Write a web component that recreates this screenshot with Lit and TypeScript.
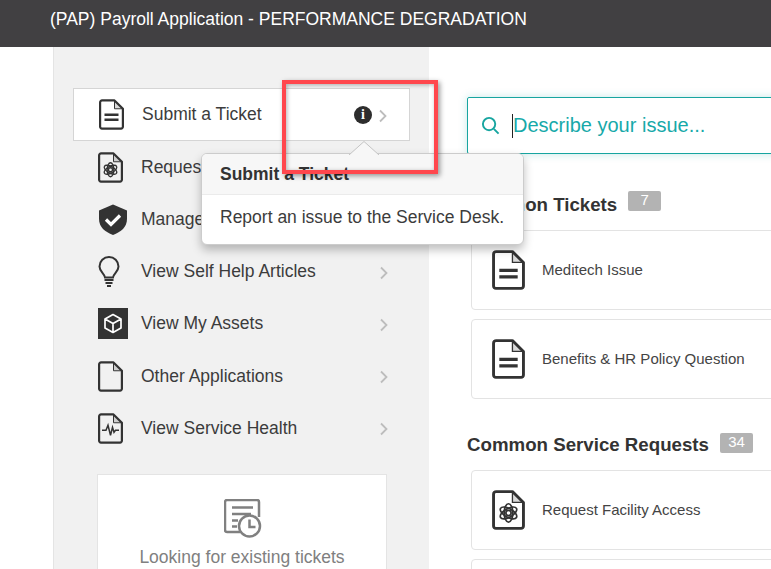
import { LitElement, html, css, svg } from "lit";
import { customElement } from "lit/decorators.js";

const DOC = "M3.1 1.2H15.5L23.9 9.5V27.5a1.8 1.8 0 0 1-1.8 1.8H2.9A1.8 1.8 0 0 1 1.1 27.5V3.2A2 2 0 0 1 3.1 1.2Z";
const FOLD = "M15.5 1.2V9.5H23.9";

const docBase = svg`<path d=${DOC} fill="none" stroke="currentColor" stroke-width="2.2" stroke-linejoin="round"/><path d="M15.5 1.5V9.100H23.400Z" fill="currentColor" opacity=".18"/><path d=${FOLD} fill="none" stroke="currentColor" stroke-width="1"/>`;

const flower = svg`<g fill="none" stroke="currentColor" stroke-width="1.3"><ellipse cx="12.5" cy="17.5" rx="3.300" ry="7"/><ellipse cx="12.5" cy="17.5" rx="3.300" ry="7" transform="rotate(60 12.5 17.5)"/><ellipse cx="12.5" cy="17.5" rx="3.300" ry="7" transform="rotate(120 12.5 17.5)"/><circle cx="12.5" cy="17.5" r="2"/></g>`;

const lines = svg`<path d="M5.500 15.5H19.500M5.500 20.5H19.500" stroke="currentColor" stroke-width="2.4" fill="none"/>`;

const icons = {
  ticket: html`<svg width="25" height="31" viewBox="0 0 25 30.5">${docBase}${lines}</svg>`,
  request: html`<svg width="25" height="31" viewBox="0 0 25 30.5">${docBase}${flower}</svg>`,
  shield: html`<svg width="30" height="31" viewBox="0 0 30 31"><path d="M15 .5 29 6.5V15C29 23 23 28 15 31 7 28 1 23 1 15V6.5Z" fill="currentColor"/><path d="M8 15.5 13 20.5 22 11.5" fill="none" stroke="#fff" stroke-width="3.2"/></svg>`,
  bulb: html`<svg width="22" height="31" viewBox="0 0 22 31"><path d="M7 21.5C6.5 17.5 1.5 15.500 1.500 10.500A9.500 9.500 0 0 1 20.500 10.500C20.500 15.500 15.500 17.500 15 21.500Z" fill="none" stroke="currentColor" stroke-width="2"/><path d="M6.500 24H15.500M7.500 27H14.500M9 30H13" stroke="currentColor" stroke-width="2" fill="none"/></svg>`,
  assets: html`<svg width="30" height="31" viewBox="0 0 30 31"><rect width="30" height="31" fill="currentColor"/><path d="M15 6.500 23 11V20L15 24.500 7 20V11ZM7 11 15 15.500 23 11M15 15.500V24.500" fill="none" stroke="#fff" stroke-width="1.700" stroke-linejoin="round"/></svg>`,
  blank: html`<svg width="25" height="31" viewBox="0 0 25 30.5">${docBase}</svg>`,
  health: html`<svg width="25" height="31" viewBox="0 0 25 30.5">${docBase}<path d="M4 17H8L10 12 12.500 22 14.500 14 16 19 17.500 17H21" fill="none" stroke="currentColor" stroke-width="1.500"/></svg>`,
};

const chevron = html`<svg class="chev" width="8" height="14" viewBox="0 0 8 14"><path d="M1 1.500 6.500 7 1 12.500" fill="none" stroke="#bdbdbd" stroke-width="1.800"/></svg>`;

const menu = [
  { icon: icons.request, label: "Request a Service" },
  { icon: icons.shield, label: "Manage Approvals" },
  { icon: icons.bulb, label: "View Self Help Articles" },
  { icon: icons.assets, label: "View My Assets" },
  { icon: icons.blank, label: "Other Applications" },
  { icon: icons.health, label: "View Service Health" },
];

const cardIcon = (body: unknown) => html`<svg class="card-icon" width="33" height="40" viewBox="0 0 25 30.5">${body}</svg>`;

@customElement("app-root")
export class AppRoot extends LitElement {
  static styles = css`
    :host {
      display: block;
      position: relative;
      width: 771px;
      height: 569px;
      overflow: hidden;
      background: #fff;
      font-family: "Liberation Sans", Arial, sans-serif;
      color: #333;
    }
    .header {
      height: 47px;
      box-sizing: border-box;
      background: #414042;
      color: #fff;
      font-size: 17.5px;
      line-height: 38px;
      padding-left: 50px;
      white-space: nowrap;
    }
    .body {
      display: flex;
      align-items: flex-start;
      padding-left: 53px;
      height: 522px;
    }
    .side {
      width: 376px;
      height: 522px;
      flex: none;
      box-sizing: border-box;
      background: #f1f1f1;
      border-left: 1px solid #e4e4e4;
      padding: 41px 19px 0;
    }
    .row {
      display: flex;
      align-items: center;
      height: 52.25px;
      box-sizing: border-box;
      padding: 0 22px 0 25px;
      font-size: 17.5px;
      color: #3c3c3c;
      white-space: nowrap;
    }
    .row.active {
      height: 53px;
      background: #fff;
      border: 1px solid #d5d5d5;
    }
    .ico {
      width: 43px;
      flex: none;
      display: flex;
      color: #333;
    }
    .label { flex: 1; }
    .chev { flex: none; margin-top: 2px; }
    .info {
      flex: none;
      width: 18px;
      height: 18px;
      border-radius: 50%;
      background: #2d2d2d;
      color: #fff;
      font: bold 14px/18px "Liberation Serif", serif;
      text-align: center;
      margin-right: 7px;
    }
    .looking {
      margin: 19.5px 0 0 24px;
      width: 290px;
      height: 140px;
      box-sizing: border-box;
      background: #fff;
      border: 1px solid #e4e4e4;
      padding-top: 24px;
      display: flex;
      flex-direction: column;
      align-items: center;
      color: #808080;
      font-size: 17.5px;
    }
    .looking svg { margin-bottom: 9px; margin-left: 2px; }
    .main {
      flex: none;
      width: 400px;
      margin-left: 38px;
      padding-top: 50px;
    }
    .search {
      height: 57px;
      box-sizing: border-box;
      border: 1px solid #17a5a0;
      border-radius: 2px;
      box-shadow: 0 0 8px rgba(23, 165, 160, .25);
      display: flex;
      align-items: center;
      padding-left: 13px;
      color: #17a9a9;
      font-size: 20px;
    }
    .search svg { margin-right: 12px; }
    .caret { width: 1px; height: 24px; background: #222; margin-right: 0; }
    .heading {
      display: flex;
      align-items: center;
      font-size: 18.7px;
      font-weight: bold;
      color: #333;
      height: 24px;
      white-space: nowrap;
    }
    .h1 { margin: 39px 0 13px; }
    .h2 { margin: 34px 0 13px; }
    .badge {
      margin: -8px 0 0 11px;
      width: 33px;
      height: 20px;
      border-radius: 2px;
      background: #b3b3b3;
      color: #fff;
      font-size: 15px;
      font-weight: normal;
      line-height: 18px;
      text-align: center;
    }
    .badge.b2 { margin-top: -4px; }
    .card {
      margin: 0 0 9px 4px;
      height: 80px;
      box-sizing: border-box;
      border: 1px solid #e3e3e3;
      border-radius: 4px;
      display: flex;
      align-items: center;
      padding-left: 20px;
      font-size: 15px;
      color: #444;
      white-space: nowrap;
    }
    .card-text { margin-bottom: 2px; }
    .card-icon { color: #333; margin-right: 17px; flex: none; }
    .tip {
      position: absolute;
      left: 201px;
      top: 153px;
      width: 323px;
      height: 92px;
      box-sizing: border-box;
      background: #fff;
      border: 1px solid #ccc;
      border-radius: 6px;
      box-shadow: 0 5px 10px rgba(0, 0, 0, .25);
    }
    .tip-title {
      height: 41px;
      box-sizing: border-box;
      background: #f7f7f7;
      border-bottom: 1px solid #ebebeb;
      border-radius: 5px 5px 0 0;
      font-size: 17.5px;
      font-weight: bold;
      line-height: 40px;
      padding-left: 18px;
    }
    .tip-body {
      font-size: 17.5px;
      line-height: 45px;
      padding-left: 18px;
      color: #3c3c3c;
      white-space: nowrap;
    }
    .arrow {
      position: absolute;
      left: 147px;
      top: -13px;
    }
    .mark {
      position: absolute;
      left: 282px;
      top: 80px;
      width: 156px;
      height: 94px;
      box-sizing: border-box;
      border: 4px solid #ff474d;
      box-shadow: 2px 2px 5px rgba(0, 0, 0, .4), inset 1px 1px 4px rgba(0, 0, 0, .3);
    }
  `;

  render() {
    return html`
      <div class="header">(PAP) Payroll Application - PERFORMANCE DEGRADATION</div>
      <div class="body">
        <div class="side">
          <div class="row active">
            <span class="ico">${icons.ticket}</span>
            <span class="label">Submit a Ticket</span>
            <span class="info">i</span>
            ${chevron}
          </div>
          ${menu.map(
            (m) => html`<div class="row">
              <span class="ico">${m.icon}</span>
              <span class="label">${m.label}</span>
              ${chevron}
            </div>`,
          )}
          <div class="looking">
            <svg width="38" height="39" viewBox="0 0 38 39" fill="none" stroke="#808080" stroke-width="2.500">
              <path d="M16 33H3a2 2 0 0 1-2-2V3a2 2 0 0 1 2-2H33a2 2 0 0 1 2 2V18"/>
              <path d="M8 8.500H29M8 15H27M8 21.500H14M8 27.500H13" stroke-width="2.500"/>
              <circle cx="25.500" cy="27" r="10.500" fill="#fff"/>
              <path d="M25.500 20.500V28H31.500"/>
            </svg>
            Looking for existing tickets
          </div>
        </div>
        <div class="main">
          <div class="search">
            <svg width="19" height="19" viewBox="0 0 20 20" fill="none" stroke="#17a5a0" stroke-width="2"><circle cx="8.500" cy="8.500" r="6.500"/><path d="M13.500 13.500 18.500 18.500"/></svg>
            <span class="caret"></span>Describe your issue...
          </div>
          <div class="heading h1">Common Tickets<span class="badge">7</span></div>
          <div class="card">${cardIcon(html`${docBase}${lines}`)}<span class="card-text">Meditech Issue</span></div>
          <div class="card">${cardIcon(html`${docBase}${lines}`)}<span class="card-text">Benefits &amp; HR Policy Question</span></div>
          <div class="heading h2">Common Service Requests<span class="badge b2">34</span></div>
          <div class="card">${cardIcon(html`${docBase}${flower}`)}<span class="card-text">Request Facility Access</span></div>
          <div class="card"></div>
        </div>
      </div>
      <div class="tip">
        <svg class="arrow" width="30" height="14" viewBox="0 0 30 14"><path d="M0 14 15 .5 30 14" fill="#f7f7f7" stroke="#c4c4c4"/></svg>
        <div class="tip-title">Submit a Ticket</div>
        <div class="tip-body">Report an issue to the Service Desk.</div>
      </div>
      <div class="mark"></div>
    `;
  }
}
